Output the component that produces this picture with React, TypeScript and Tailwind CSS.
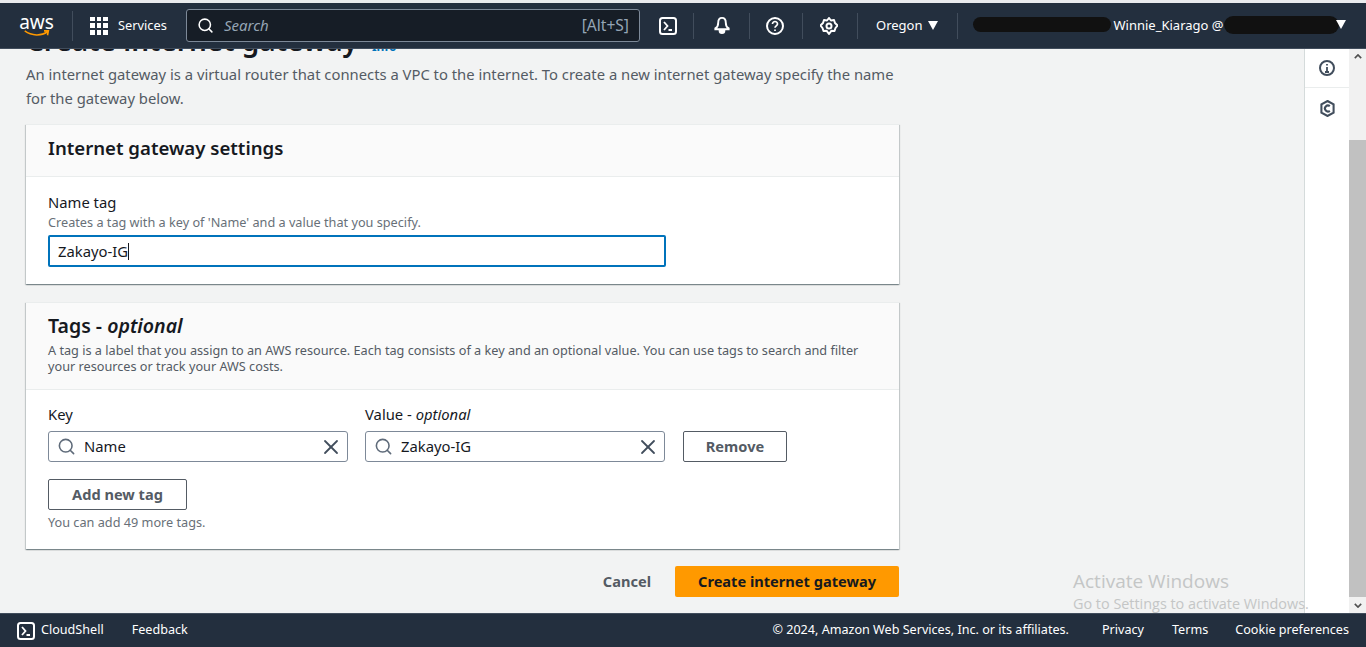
import { Search, X } from "lucide-react";

const font = "font-['Noto_Sans',sans-serif]";

function ShellIcon({ className }: { className: string }) {
  return (
    <svg viewBox="0 0 18 18" className={className} fill="none" stroke="white" strokeWidth="2">
      <rect x="1" y="1" width="16" height="16" rx="2.5" />
      <path d="M5 5l3.5 4L5 13M9.5 13H13" strokeWidth="1.8" />
    </svg>
  );
}

function Caret({ className }: { className: string }) {
  return (
    <svg viewBox="0 0 10 9" className={className} fill="white">
      <path d="M0 0h10L5 9z" />
    </svg>
  );
}

function Divider() {
  return <div className="h-[26px] w-px bg-[#414d5c]" />;
}

function TagField({ value }: { value: string }) {
  return (
    <div className="flex h-[31px] w-[300px] items-center rounded-[3px] border border-[#7d8998] bg-white pl-[8px] pr-[4px]">
      <Search size={19} strokeWidth={2} className="text-[#5f6b7a]" />
      <span className="ml-[8px] flex-1 text-[14.8px] text-[#16191f]">{value}</span>
      <X size={24} strokeWidth={1.8} className="text-[#414d5c]" />
    </div>
  );
}

export default function App() {
  return (
    <div className={`${font} relative flex h-[647px] w-[1366px] flex-col overflow-hidden bg-[#f2f3f3]`}>
      {/* top nav */}
      <div className="z-10 border-t-[3px] border-b border-t-[#e9ebed] border-b-[#414d5c] bg-[#232f3e]">
        <div className="flex h-[45px] items-center text-white">
          <div className="ml-[15px] flex w-[43px] flex-col items-center">
            <span className="text-[19px] leading-[16px]">aws</span>
            <svg viewBox="0 0 30 8" className="h-[7px] w-[28px]" fill="none" stroke="#ff9900" strokeWidth="1.8">
              <path d="M1 1c8 6 19 6 26 1M23 1l5 0-1 5" />
            </svg>
          </div>
          <div className="ml-[14px] h-[30px] w-px bg-[#414d5c]" />
          <div className="ml-[17px] grid h-[18px] w-[18px] grid-cols-3 gap-[2px]">
            {Array.from({ length: 9 }).map((_, i) => (
              <span key={i} className="bg-white" />
            ))}
          </div>
          <span className="ml-[10px] w-[50px] text-[12.8px]">Services</span>
          <div className="ml-[18px] flex h-[33px] w-[454px] items-center rounded-[3px] border border-[#7d8998] bg-[#161d26] pl-[10px] pr-[10px]">
            <Search size={17} strokeWidth={2.2} className="text-white" />
            <span className="ml-[10px] flex-1 text-[15px] italic text-[#95a5b5]">Search</span>
            <span className="text-[15.6px] text-[#95a5b5]">[Alt+S]</span>
          </div>
          <ShellIcon className="ml-[19px] h-[18px] w-[18px]" />
          <div className="ml-[16px]"><Divider /></div>
          <svg viewBox="0 0 18 20" className="ml-[19px] h-[19px] w-[18px]" fill="none" stroke="white" strokeWidth="2">
            <path d="M9 2c-3 0-4 2.500-4 5 0 3-1 5-3 6v1h14v-1c-2-1-3-3-3-6 0-2.500-1-5-4-5z" />
            <path d="M6.500 15.500a2.500 2.500 0 005 0z" fill="white" />
          </svg>
          <div className="ml-[18px]"><Divider /></div>
          <svg viewBox="0 0 18 18" className="ml-[16px] h-[18px] w-[18px]" fill="none" stroke="white" strokeWidth="2">
            <circle cx="9" cy="9" r="8" />
            <path d="M6.500 7a2.500 2.500 0 115 0c0 1.800-2.500 2-2.500 3.800" strokeWidth="1.700" />
            <path d="M9 12.500v1.500" strokeWidth="1.700" />
          </svg>
          <div className="ml-[18px]"><Divider /></div>
          <svg viewBox="0 0 18 18" className="ml-[17px] h-[18px] w-[18px]" fill="none" stroke="white" strokeWidth="2">
            <path d="M9 1l2 2.500 3-.5 1 3 2.500 2.500L15.500 11l-1 3-3-.3L9 17l-2.500-3.300-3 .3-1-3L.5 8.500 3 6l1-3 3 .5z" strokeLinejoin="round" />
            <circle cx="9" cy="9" r="2.500" />
          </svg>
          <div className="ml-[19px]"><Divider /></div>
          <span className="ml-[18px] pt-[1px] text-[13px]">Oregon</span>
          <Caret className="ml-[5px] h-[9px] w-[10px]" />
          <div className="ml-[19px]"><Divider /></div>
          <div className="relative ml-[15px] flex-1 pt-[1px]">
            <span className="ml-[141px] block text-[13px]">Winnie_Kiarago @</span>
            <div className="absolute left-0 top-[2px] h-[15px] w-[138px] rounded-full bg-[#111]" />
            <div className="absolute left-[251px] top-[1px] h-[18px] w-[115px] rounded-full bg-[#111]" />
            <Caret className="absolute left-[363px] top-[5px] h-[9px] w-[10px]" />
          </div>
        </div>
      </div>

      {/* page body */}
      <div className="flex min-h-0 flex-1 overflow-hidden">
        <div className="w-[1304px] shrink-0 pl-[26px]">
          <div className="mt-[-27px] flex w-[873px] items-baseline">
            <h1 className="text-[28px] font-semibold leading-[36px] text-[#16191f]">Create internet gateway</h1>
            <span className="ml-[14px] text-[12px] font-bold text-[#0073bb]">Info</span>
          </div>
          <p className="mt-[4px] w-[873px] text-[14.8px] leading-[24px] text-[#545b64]">
            An internet gateway is a virtual router that connects a VPC to the internet. To create a new internet gateway specify the name for the gateway below.
          </p>

          <section className="mt-[14px] w-[873px] border-t border-[#eaeded] bg-white shadow-[0_1px_1px_0_rgba(0,28,36,0.3),1px_1px_1px_0_rgba(0,28,36,0.15),-1px_1px_1px_0_rgba(0,28,36,0.15)]">
            <div className="flex h-[52px] items-center border-b border-[#eaeded] bg-[#fafafa] pb-[6px] pl-[22px]">
              <h2 className="text-[18.6px] font-semibold text-[#16191f]">Internet gateway settings</h2>
            </div>
            <div className="px-[22px] pb-[17px] pt-[15px]">
              <div className="text-[14.8px] leading-[20px] text-[#16191f]">Name tag</div>
              <div className="mt-[2px] text-[12.7px] leading-[16px] text-[#687078]">Creates a tag with a key of 'Name' and a value that you specify.</div>
              <div className="mt-[5px] flex h-[32px] w-[618px] items-center rounded-[2px] border-2 border-[#0073bb] bg-white pl-[8px]">
                <span className="text-[14.8px] text-[#16191f]">Zakayo-IG</span>
                <span className="h-[17px] w-px bg-[#16191f]" />
              </div>
            </div>
          </section>

          <section className="mt-[18px] w-[873px] border-t border-[#eaeded] bg-white shadow-[0_1px_1px_0_rgba(0,28,36,0.3),1px_1px_1px_0_rgba(0,28,36,0.15),-1px_1px_1px_0_rgba(0,28,36,0.15)]">
            <div className="h-[87px] border-b border-[#eaeded] bg-[#fafafa] pl-[22px] pr-[30px] pt-[11px]">
              <h2 className="text-[19.5px] font-semibold leading-[24px] text-[#16191f]">
                Tags - <i className="font-semibold">optional</i>
              </h2>
              <p className="mt-[4px] text-[12.7px] leading-[16px] text-[#545b64]">
                A tag is a label that you assign to an AWS resource. Each tag consists of a key and an optional value. You can use tags to search and filter your resources or track your AWS costs.
              </p>
            </div>
            <div className="px-[22px] pb-[19px] pt-[14px]">
              <div className="flex items-end">
                <div className="w-[300px]">
                  <div className="mb-[7px] text-[14.8px] leading-[20px] text-[#16191f]">Key</div>
                  <TagField value="Name" />
                </div>
                <div className="ml-[17px] w-[300px]">
                  <div className="mb-[7px] text-[14.8px] leading-[20px] text-[#16191f]">
                    Value - <i>optional</i>
                  </div>
                  <TagField value="Zakayo-IG" />
                </div>
                <button className="ml-[18px] h-[31px] w-[104px] rounded-[2px] border border-[#545b64] bg-white text-[14.6px] font-bold text-[#545b64]">
                  Remove
                </button>
              </div>
              <button className="mt-[17px] block h-[31px] w-[139px] rounded-[2px] border border-[#545b64] bg-white text-[14.6px] font-bold text-[#545b64]">
                Add new tag
              </button>
              <div className="mt-[4px] text-[12.7px] leading-[16px] text-[#687078]">You can add 49 more tags.</div>
            </div>
          </section>

          <div className="mt-[17px] flex w-[873px] items-center justify-end">
            <span className="text-[14.6px] font-bold text-[#545b64]">Cancel</span>
            <button className="ml-[24px] h-[31px] w-[224px] rounded-[2px] bg-[#ff9900] text-[14.6px] font-bold text-[#16191f]">
              Create internet gateway
            </button>
          </div>
        </div>

        {/* side tools */}
        <div className="w-[45px] shrink-0 border-l border-[#d5dbdb] bg-white">
          <div className="flex h-[39px] items-center justify-center border-b border-[#eaeded]">
            <svg viewBox="0 0 16 16" className="h-[16px] w-[16px]" fill="none" stroke="#414d5c" strokeWidth="2">
              <circle cx="8" cy="8" r="7" />
              <path d="M8 7v5M6 12h4M8 4v1.500" strokeWidth="1.800" />
            </svg>
          </div>
          <div className="flex h-[40px] items-center justify-center">
            <svg viewBox="0 0 16 18" className="h-[17px] w-[15px]" fill="none" stroke="#414d5c" strokeWidth="2.200">
              <path d="M8 1l6.500 3.700v8.600L8 17l-6.500-3.700V4.700z" />
              <path d="M10.500 6.500a3.200 3.200 0 100 5" />
            </svg>
          </div>
        </div>

        {/* browser scrollbar */}
        <div className="flex w-[17px] shrink-0 flex-col items-center bg-[#f1f1f1]">
          <svg viewBox="0 0 10 6" className="mt-[5px] h-[5px] w-[8px]" fill="none" stroke="#505050" strokeWidth="2">
            <path d="M1 5l4-4 4 4" />
          </svg>
          <div className="mt-[81px] h-[457px] w-full bg-[#c1c1c1]" />
          <svg viewBox="0 0 10 6" className="mt-[6px] h-[5px] w-[8px]" fill="none" stroke="#505050" strokeWidth="2">
            <path d="M1 1l4 4 4-4" />
          </svg>
        </div>
      </div>

      {/* footer */}
      <div className="z-10 flex h-[34px] items-center border-t border-[#414d5c] bg-[#232f3e] text-[12.6px] text-white">
        <ShellIcon className="ml-[17px] h-[18px] w-[18px]" />
        <span className="ml-[6px]">CloudShell</span>
        <span className="ml-[28px]">Feedback</span>
        <span className="ml-auto">© 2024, Amazon Web Services, Inc. or its affiliates.</span>
        <span className="ml-[33px]">Privacy</span>
        <span className="ml-[28px]">Terms</span>
        <span className="ml-[27px] mr-[17px]">Cookie preferences</span>
      </div>

      {/* windows watermark */}
      <div className="pointer-events-none absolute left-[1073px] top-[569px] z-20 font-['Open_Sans',sans-serif] text-[#c4c6c6]">
        <div className="text-[19px] leading-[25px]">Activate Windows</div>
        <div className="text-[14.4px] leading-[20px]">Go to Settings to activate Windows.</div>
      </div>
    </div>
  );
}
